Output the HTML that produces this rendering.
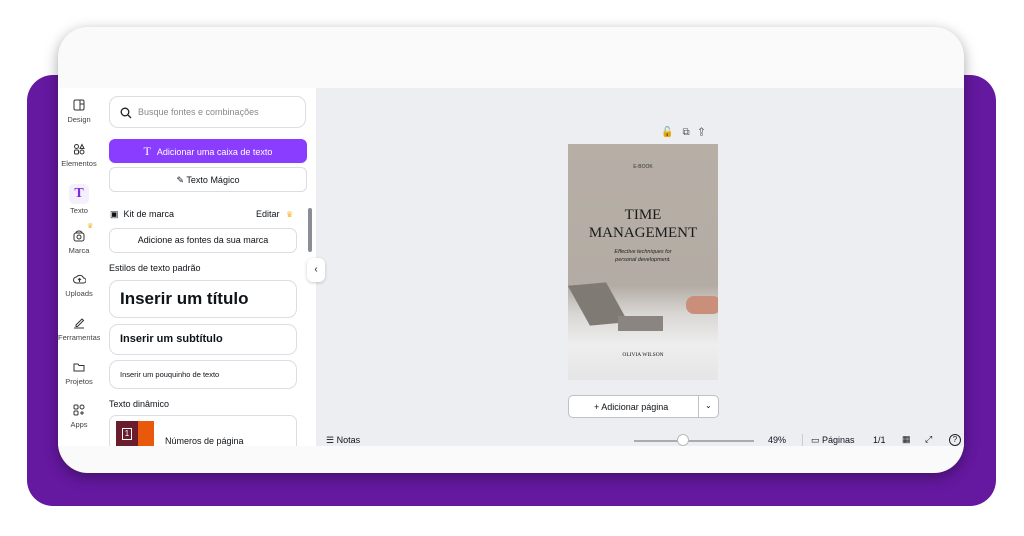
<!DOCTYPE html>
<html><head><meta charset="utf-8"><style>
*{box-sizing:border-box;margin:0;padding:0}
body{width:1024px;height:536px;background:#fff;position:relative;overflow:hidden;font-family:"Liberation Sans",sans-serif;color:#0e1318}
.purple{position:absolute;left:27px;top:75px;width:969px;height:431px;background:#6518a0;border-radius:26px}
.card{position:absolute;left:58px;top:27px;width:906px;height:446px;background:#fafafa;border-radius:30px;overflow:hidden;box-shadow:0 4px 14px rgba(0,0,0,.35)}
.app{position:absolute;left:0;top:61px;width:906px;height:358px;background:#fff;overflow:hidden}
.rail{position:absolute;left:0;top:0;width:42px;height:358px;background:#fff}
.ri{position:absolute;left:0;width:42px;text-align:center;font-size:7.5px;color:#444}
.ri svg{display:block;margin:0 auto 4px}
.panel{position:absolute;left:42px;top:0;width:216px;height:358px;background:#fff;overflow:hidden}
.canvas{position:absolute;left:258px;top:0;width:648px;height:358px;background:#edeef2}
.box{position:absolute;border:1px solid #dcdde2;border-radius:7px;background:#fff}
.t{position:absolute;font-size:9px}
</style></head><body>
<div class="purple"></div>
<div class="card">
<div class="app">
 <div class="rail">
  <div class="ri" style="top:11px"><svg width="12" height="12" viewBox="0 0 12 12" fill="none" stroke="#333" stroke-width="1"><rect x="1" y="1" width="10" height="10" rx="1.5"/><path d="M7 1v10M7 5h4"/></svg>Design</div>
  <div class="ri" style="top:55px"><svg width="12" height="12" viewBox="0 0 12 12" fill="none" stroke="#333" stroke-width="1"><circle cx="3.5" cy="3.5" r="2"/><path d="M7 5.5l2-4 2 4z"/><rect x="1.5" y="7" width="4" height="4" rx="1"/><rect x="7" y="7" width="4" height="4" rx="2"/></svg>Elementos</div>
  <div class="ri" style="top:96px"><div style="width:20px;height:20px;margin:0 auto 2px;border-radius:5px;background:#f3f0fb;color:#7d2ae8;font:bold 14px 'Liberation Serif',serif;line-height:20px">T</div>Texto</div>
  <div style="position:absolute;left:29px;top:134px;color:#f5b623;font-size:7px">♛</div>
  <div class="ri" style="top:142px"><svg width="12" height="12" viewBox="0 0 12 12" fill="none" stroke="#333" stroke-width="1"><rect x="1" y="3" width="10" height="8" rx="2"/><circle cx="6" cy="7" r="2"/><path d="M3 3a3 2 0 0 1 6 0"/></svg>Marca</div>
  <div class="ri" style="top:185px"><svg width="13" height="12" viewBox="0 0 13 12" fill="none" stroke="#333" stroke-width="1"><path d="M3.5 10a3 3 0 0 1 0-6 4 4 0 0 1 7 1 2.5 2.5 0 0 1 0 5z"/><path d="M6.5 9V5.5M5 7l1.5-1.5L8 7"/></svg>Uploads</div>
  <div class="ri" style="top:229px"><svg width="12" height="12" viewBox="0 0 12 12" fill="none" stroke="#333" stroke-width="1"><path d="M3 8l6-6 1.5 1.5-6 6H3z M1 11h10"/></svg>Ferramentas</div>
  <div class="ri" style="top:273px"><svg width="12" height="12" viewBox="0 0 12 12" fill="none" stroke="#333" stroke-width="1"><path d="M1 3h4l1 1.5h5V10H1z"/></svg>Projetos</div>
  <div class="ri" style="top:316px"><svg width="12" height="12" viewBox="0 0 12 12" fill="none" stroke="#333" stroke-width="1"><rect x="1" y="1" width="4" height="4" rx="1"/><rect x="7" y="1" width="4" height="4" rx="2"/><rect x="1" y="7" width="4" height="4" rx="1"/><path d="M9 7v4M7 9h4"/></svg>Apps</div>
 </div>
 <div class="panel">
  <div class="box" style="left:9px;top:8px;width:197px;height:32px;border-radius:9px"><svg style="position:absolute;left:10px;top:10px" width="12" height="12" viewBox="0 0 12 12" fill="none" stroke="#222" stroke-width="1.3"><circle cx="5" cy="5" r="3.8"/><path d="M8 8l3 3"/></svg><span class="t" style="left:28px;top:10px;color:#888">Busque fontes e combinações</span></div>
  <div style="position:absolute;left:9px;top:51px;width:198px;height:24px;background:#8b3dff;border-radius:6px;color:#fff;font-size:9px;text-align:center;line-height:24px"><span style="font-family:'Liberation Serif',serif;font-size:12px;margin-right:6px">T</span>Adicionar uma caixa de texto</div>
  <div class="box" style="left:9px;top:79px;width:198px;height:25px;border-radius:6px;text-align:center;line-height:24px;font-size:9px">✎ Texto Mágico</div>
  <div class="t" style="left:10px;top:121px;font-size:9px">▣ &nbsp;Kit de marca</div>
  <div class="t" style="left:156px;top:121px;font-size:9px">Editar <span style="color:#f5b623;margin-left:4px;font-size:8px">♛</span></div>
  <div class="box" style="left:9px;top:140px;width:188px;height:25px;text-align:center;line-height:23px;font-size:9px">Adicione as fontes da sua marca</div>
  <div class="t" style="left:9px;top:175px">Estilos de texto padrão</div>
  <div class="box" style="left:9px;top:192px;width:188px;height:38px;border-radius:9px"><span style="position:absolute;left:10px;top:8px;font-size:17px;font-weight:bold">Inserir um título</span></div>
  <div class="box" style="left:9px;top:236px;width:188px;height:31px;border-radius:9px"><span style="position:absolute;left:10px;top:8px;font-size:11px;font-weight:bold">Inserir um subtítulo</span></div>
  <div class="box" style="left:9px;top:272px;width:188px;height:29px;border-radius:9px"><span style="position:absolute;left:10px;top:9px;font-size:7.5px">Inserir um pouquinho de texto</span></div>
  <div class="t" style="left:9px;top:311px">Texto dinâmico</div>
  <div class="box" style="left:9px;top:327px;width:188px;height:40px;border-radius:7px;overflow:hidden"><div style="position:absolute;left:6px;top:5px;width:22px;height:30px;background:#6a1d2c"></div><div style="position:absolute;left:28px;top:5px;width:16px;height:30px;background:#e8590c"></div><div style="position:absolute;left:12px;top:12px;width:10px;height:12px;border:1px solid #fff;color:#fff;font-size:8px;text-align:center">1</div><span style="position:absolute;left:55px;top:20px;font-size:9px">Números de página</span></div>
  <div style="position:absolute;left:208px;top:120px;width:4px;height:44px;background:#8b8d94;border-radius:2px"></div>
 </div>
 <div class="canvas">
  <div style="position:absolute;left:-9px;top:170px;width:18px;height:24px;background:#fff;border-radius:6px;box-shadow:0 1px 3px rgba(0,0,0,.2);text-align:center;line-height:24px;font-size:10px">‹</div>
  <div class="t" style="left:345px;top:39px;color:#555;font-size:10px;letter-spacing:9px">🔓⧉⇪</div>
  <div style="position:absolute;left:252px;top:56px;width:150px;height:236px;background:linear-gradient(#b7afa6 0%,#b3aca4 60%,#d9d7d4 72%,#eeeeee 85%,#e5e5e5 100%);overflow:hidden">
   <div style="position:absolute;left:0;width:150px;top:20px;text-align:center;font-size:5px;color:#333">E-BOOK</div>
   <div style="position:absolute;left:0;width:150px;top:62px;text-align:center;font:15px/18px 'Liberation Serif',serif;color:#1a1a1a">TIME<br>MANAGEMENT</div>
   <div style="position:absolute;left:0;width:150px;top:104px;text-align:center;font-size:5.5px;font-style:italic;color:#222;line-height:8px">Effective techniques for<br>personal development.</div>
   <div style="position:absolute;left:10px;top:140px;width:40px;height:40px;background:#807a75;transform:skewX(25deg) rotate(-5deg)"></div>
   <div style="position:absolute;left:50px;top:172px;width:45px;height:15px;background:#8a8580"></div>
   <div style="position:absolute;left:118px;top:152px;width:35px;height:18px;background:#c98f7b;border-radius:8px"></div>
   <div style="position:absolute;left:0;width:150px;top:208px;text-align:center;font:5.5px 'Liberation Serif',serif;color:#111">OLIVIA WILSON</div>
  </div>
  <div class="box" style="left:252px;top:307px;width:151px;height:23px;border-color:#bfc1c6;border-radius:5px"><span style="position:absolute;left:25px;top:6px;font-size:9px">+ Adicionar página</span><div style="position:absolute;left:129px;top:0;width:1px;height:21px;background:#bfc1c6"></div><span style="position:absolute;left:136px;top:5px;font-size:8px">⌄</span></div>
  <div class="t" style="left:10px;top:347px">☰ Notas</div>
  <div style="position:absolute;left:318px;top:352px;width:120px;height:2px;background:#a9abb0"></div>
  <div style="position:absolute;left:361px;top:346px;width:12px;height:12px;border-radius:50%;background:#fff;border:1px solid #bbb"></div>
  <div class="t" style="left:452px;top:347px">49%</div>
  <div style="position:absolute;left:486px;top:346px;width:1px;height:12px;background:#ccc"></div>
  <div class="t" style="left:495px;top:347px">▭ Páginas</div>
  <div class="t" style="left:557px;top:347px">1/1</div>
  <div class="t" style="left:586px;top:346px">▦</div>
  <div class="t" style="left:609px;top:346px">⤢</div>
  <div style="position:absolute;left:633px;top:346px;width:12px;height:12px;border:1.2px solid #222;border-radius:50%;font-size:8px;text-align:center;line-height:10px">?</div>
 </div>
</div>
</div>
</body></html>
